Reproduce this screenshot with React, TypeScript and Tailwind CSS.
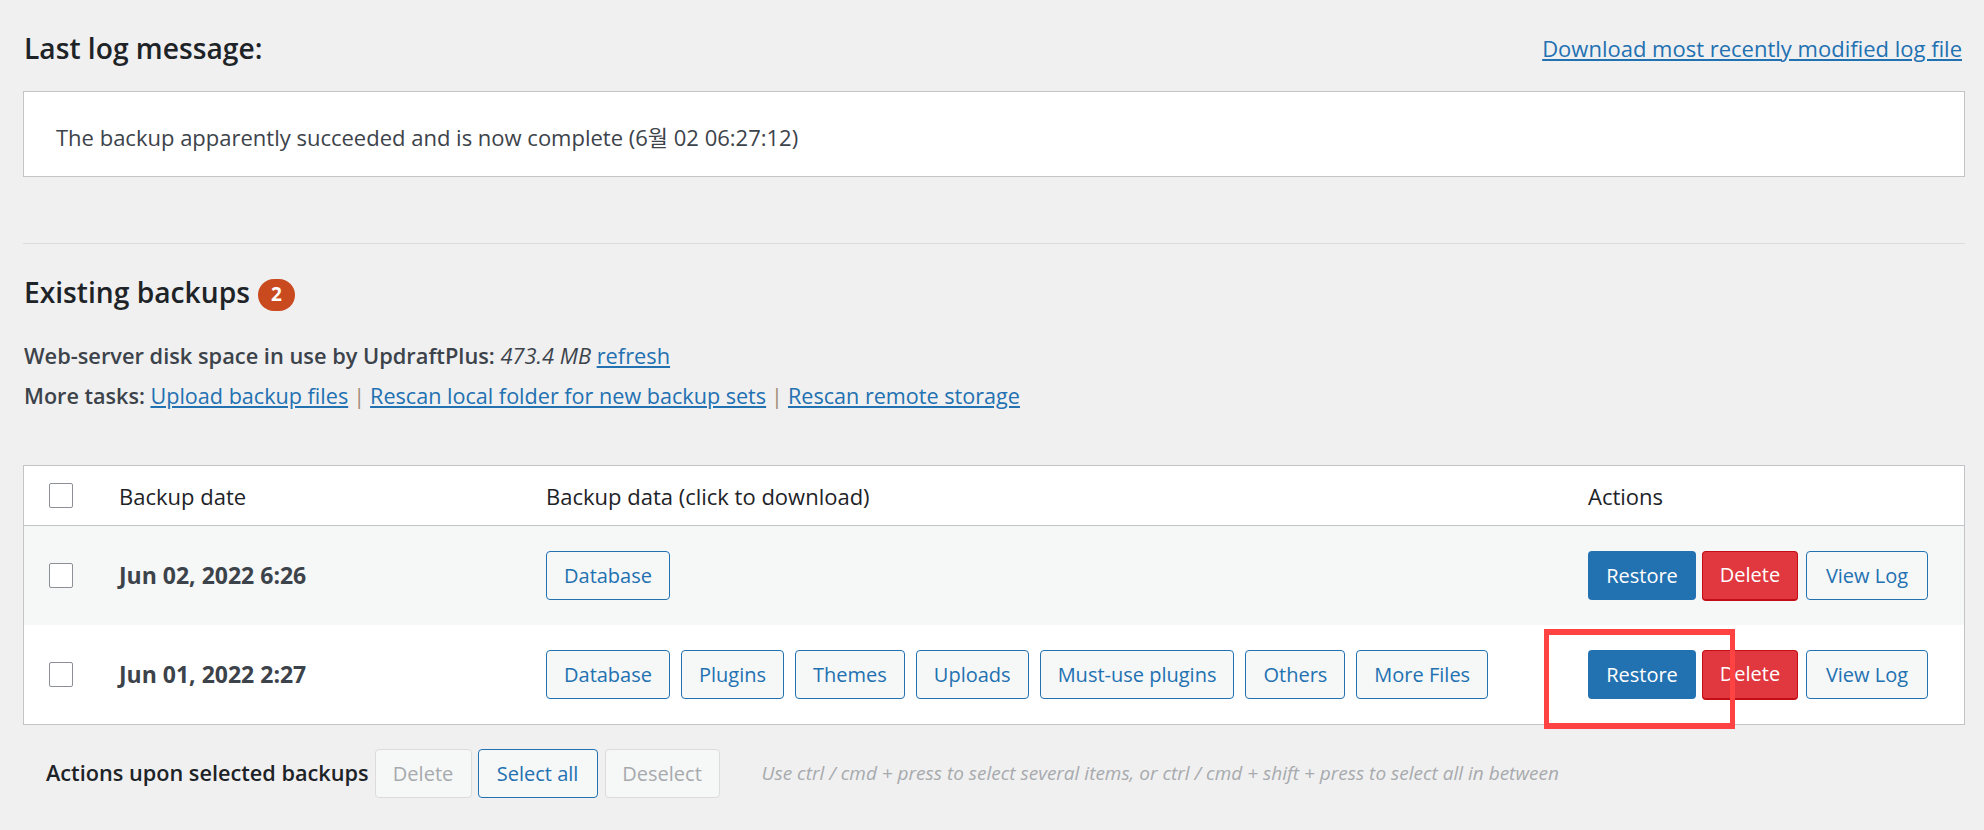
import type { ReactNode } from "react";

const font = { fontFamily: '"Open Sans", "Noto Sans CJK KR", sans-serif' };

const dataButton =
  "h-[49px] px-[17px] flex items-center rounded-[4px] border border-[#2271b1] bg-[#f6f7f7] text-[#2271b1] text-[20px]";

const Checkbox = () => (
  <div className="w-[24px] h-[25px] border border-[#8c8f94] rounded-[2px] bg-white" />
);

const DataButton = ({ children }: { children: ReactNode }) => (
  <button className={dataButton}>{children}</button>
);

const ActionButtons = () => (
  <div className="flex items-center">
    <button className="h-[49px] w-[108px] rounded-[4px] bg-[#2271b1] text-white text-[20px]">
      Restore
    </button>
    <button className="ml-[6px] h-[50px] w-[96px] rounded-[4px] bg-[#e0383e] border border-[#c20e14] border-b-[2px] text-white text-[20px]">
      Delete
    </button>
    <button className="ml-[8px] h-[49px] w-[122px] rounded-[4px] border border-[#2271b1] bg-[#f6f7f7] text-[#2271b1] text-[20px]">
      View Log
    </button>
  </div>
);

type Row = { date: string; files: string[]; shaded: boolean };

const rows: Row[] = [
  { date: "Jun 02, 2022 6:26", files: ["Database"], shaded: true },
  {
    date: "Jun 01, 2022 2:27",
    files: ["Database", "Plugins", "Themes", "Uploads", "Must-use plugins", "Others", "More Files"],
    shaded: false,
  },
];

export default function App() {
  return (
    <div
      className="relative min-h-[830px] w-[1984px] bg-[#f0f0f1] text-[#3c434a] pl-[23px] pr-[19px]"
      style={font}
    >
      {/* Last log message */}
      <div className="h-[91px] pt-[5px] flex items-center justify-between">
        <h2 className="text-[28.2px] font-semibold text-[#1d2327] pl-[1px]">Last log message:</h2>
        <a href="#" className="text-[22px] text-[#2271b1] underline pr-[3px]">
          Download most recently modified log file
        </a>
      </div>
      <div className="h-[86px] bg-white border border-[#c3c4c7] flex items-center px-[32px] pt-[6px] text-[22px]">
        The backup apparently succeeded and is now complete (6월 02 06:27:12)
      </div>

      <div className="mt-[66px] border-t border-[#dcdcde]" />

      {/* Existing backups */}
      <div className="h-[92px] pt-[5px] flex items-center gap-[8px]">
        <h2 className="text-[28.2px] font-semibold text-[#1d2327] pl-[1px]">Existing backups</h2>
        <span className="w-[37px] h-[32px] rounded-full bg-[#ca4a1f] text-white text-[19px] font-bold flex items-center justify-center mt-[4px]">
          2
        </span>
      </div>
      <div className="h-[40px] flex items-center text-[21.8px] pl-[1px]">
        <span className="font-semibold">Web-server disk space in use by UpdraftPlus:&nbsp;</span>
        <em>473.4 MB</em>
        <span>&nbsp;</span>
        <a href="#" className="text-[#2271b1] underline">refresh</a>
      </div>
      <div className="h-[40px] flex items-center text-[21.6px] pl-[1px]">
        <span className="font-semibold">More tasks:&nbsp;</span>
        <a href="#" className="text-[#2271b1] underline">Upload backup files</a>
        <span className="mx-[5px] text-[#a38c74]">|</span>
        <a href="#" className="text-[#2271b1] underline">Rescan local folder for new backup sets</a>
        <span className="mx-[5px] text-[#a38c74]">|</span>
        <a href="#" className="text-[#2271b1] underline">Rescan remote storage</a>
      </div>

      {/* Backups table */}
      <div className="mt-[49px] border border-[#c3c4c7] bg-white">
        <div className="grid grid-cols-[95px_427px_1042px_1fr] h-[60px] items-center border-b border-[#c3c4c7] text-[22px] font-medium text-[#1d2327]">
          <div className="pl-[25px]">
            <Checkbox />
          </div>
          <div className="pt-[2px]">Backup date</div>
          <div className="pt-[2px]">Backup data (click to download)</div>
          <div className="pt-[2px]">Actions</div>
        </div>
        {rows.map((row) => (
          <div
            key={row.date}
            className={`grid grid-cols-[95px_427px_1042px_1fr] h-[99px] items-center ${
              row.shaded ? "bg-[#f6f7f7]" : "bg-white"
            }`}
          >
            <div className="pl-[25px]">
              <Checkbox />
            </div>
            <div className="font-bold text-[23px] text-[#3c434a]">{row.date}</div>
            <div className="flex gap-[11px]">
              {row.files.map((f) => (
                <DataButton key={f}>{f}</DataButton>
              ))}
            </div>
            <ActionButtons />
          </div>
        ))}
      </div>

      {/* Bulk actions */}
      <div className="mt-[24px] h-[49px] flex items-center pl-[23px]">
        <span className="text-[21.7px] font-semibold text-[#1d2327]">Actions upon selected backups</span>
        <button className="ml-[6px] h-[49px] w-[97px] rounded-[4px] border border-[#dcdcde] bg-[#f6f7f7] text-[#a7aaad] text-[20px]">
          Delete
        </button>
        <button className="ml-[6px] h-[49px] w-[120px] rounded-[4px] border border-[#2271b1] bg-[#f6f7f7] text-[#2271b1] text-[20px]">
          Select all
        </button>
        <button className="ml-[7px] h-[49px] w-[115px] rounded-[4px] border border-[#dcdcde] bg-[#f6f7f7] text-[#a7aaad] text-[20px]">
          Deselect
        </button>
        <span className="ml-[42px] italic text-[19px] text-[#a7aaad]">
          Use ctrl / cmd + press to select several items, or ctrl / cmd + shift + press to select all in between
        </span>
      </div>

      {/* highlight annotation */}
      <div className="absolute left-[1544px] top-[629px] w-[191px] h-[100px] border-x-[5px] border-y-[6px] border-[#ff4343] pointer-events-none" />
    </div>
  );
}
